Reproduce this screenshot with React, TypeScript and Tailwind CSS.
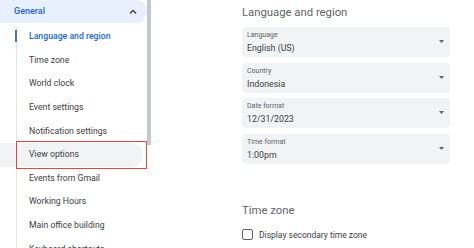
import React from "react";

const items = [
  "Language and region",
  "Time zone",
  "World clock",
  "Event settings",
  "Notification settings",
  "View options",
  "Events from Gmail",
  "Working Hours",
  "Main office building",
  "Keyboard shortcuts",
];

function Field({ label, value }: { label: string; value: string }) {
  return (
    <div className="relative h-[30px] w-[208px] rounded-[4px] bg-[#f1f3f4] pl-[5px]">
      <div className="pt-[4px] text-[7px] leading-[9px] text-[#5f6368]">{label}</div>
      <div className="mt-[3px] text-[8.8px] leading-[11px] text-[#3c4043]">{value}</div>
      <svg
        className="absolute right-[6px] top-[13px]"
        width="5"
        height="3"
        viewBox="0 0 5 3"
      >
        <path d="M0 0 L5 0 L2.5 3 Z" fill="#5f6368" />
      </svg>
    </div>
  );
}

export default function App() {
  return (
    <div
      className="flex h-[248px] w-[474px] overflow-hidden bg-white"
      style={{ fontFamily: "Roboto, 'Liberation Sans', sans-serif" }}
    >
      {/* Sidebar */}
      <div className="relative w-[147px] shrink-0">
        <div className="flex h-[23px] items-center justify-between rounded-r-full bg-[#e8f0fe] pl-[14px] pr-[10px]">
          <span className="text-[9px] font-medium text-[#1967d2]">General</span>
          <svg width="8" height="6" viewBox="0 0 8 6">
            <path d="M1 4.5 L4 1.5 L7 4.5" fill="none" stroke="#3c4043" strokeWidth="1.3" />
          </svg>
        </div>
        <div className="relative pt-[2px]">
          <div className="absolute left-[15.5px] top-[4px] h-[230px] w-px bg-[#e3e3e3]" />
          {items.map((t, i) => {
            const active = i === 0;
            const view = i === 5;
            return (
              <div key={t} className="relative h-[23.6px]">
                {view && (
                  <div className="absolute inset-y-0 left-0 right-[4px] rounded-r-full bg-[#f1f3f4]" />
                )}
                {active && (
                  <div className="absolute left-[15px] top-[5px] h-[12px] w-[2px] bg-[#4a72c0]" />
                )}
                <div
                  className={
                    "relative flex h-full items-center pl-[29px] text-[8.7px] " +
                    (active ? "font-medium text-[#1967d2]" : "text-[#3c4043]")
                  }
                >
                  {t}
                </div>
                {view && (
                  <div className="absolute -bottom-[2.5px] -top-[1.5px] left-[16px] right-0 border-[1.5px] border-[#e5453b]" />
                )}
              </div>
            );
          })}
        </div>
      </div>
      {/* Scrollbar */}
      <div className="w-[5px] shrink-0">
        <div className="h-[145px] w-[4px] bg-[#c4c7cc]" />
      </div>
      {/* Main */}
      <div className="ml-[90px] flex flex-col">
        <div className="mt-[5px] text-[11.3px] leading-[15px] text-[#5f6368]">Language and region</div>
        <div className="mt-[7px] flex flex-col gap-[5.5px]">
          <Field label="Language" value="English (US)" />
          <Field label="Country" value="Indonesia" />
          <Field label="Date format" value="12/31/2023" />
          <Field label="Time format" value="1:00pm" />
        </div>
        <div className="mt-[39px] text-[11.3px] leading-[15px] text-[#5f6368]">Time zone</div>
        <div className="mt-[11px] flex items-center">
          <div className="h-[11px] w-[11px] rounded-[2px] border-[1.5px] border-[#5f6368]" />
          <span className="ml-[6px] text-[8.5px] text-[#3c4043]">Display secondary time zone</span>
        </div>
      </div>
    </div>
  );
}
